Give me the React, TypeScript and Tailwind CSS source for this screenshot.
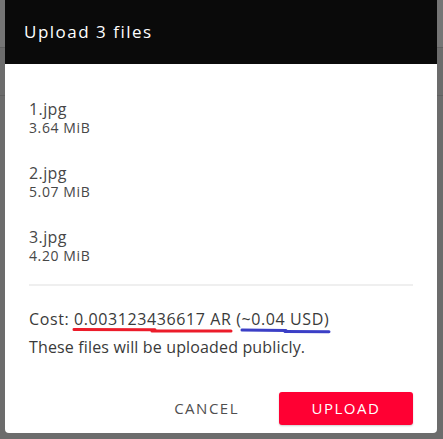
const files = [
  { name: '1.jpg', size: '3.64 MiB' },
  { name: '2.jpg', size: '5.07 MiB' },
  { name: '3.jpg', size: '4.20 MiB' },
]

// hand-drawn highlight strokes laid over the cost line
function CostMarks() {
  return (
    <svg className="absolute left-0 top-0 pointer-events-none overflow-visible" width={320} height={30}>
      <path d="M45 21.5 L126 21.8" stroke="#ec1c2a" strokeWidth={3} strokeLinecap="round" fill="none" />
      <path d="M123 23 L202 23" stroke="#ec1c2a" strokeWidth={3} strokeLinecap="round" fill="none" />
      <path d="M213 22 L257 22.4" stroke="#3b3fc6" strokeWidth={3} strokeLinecap="round" fill="none" />
      <path d="M256 23.6 L300 23.8" stroke="#3b3fc6" strokeWidth={3} strokeLinecap="round" fill="none" />
    </svg>
  )
}

export default function App() {
  return (
    <div className="w-[443px] h-[439px] bg-[linear-gradient(to_bottom,#757575_0,#757575_47px,#606060_47px,#606060_48px,#6c6c6c_48px,#6c6c6c_95px,#606060_95px,#606060_96px,#6c6c6c_96px)] pl-[5px] pr-[6px] pb-[6px] font-['Open_Sans',sans-serif]">
      <div className="h-[433px] bg-white rounded-b-[4px] flex flex-col overflow-hidden">
        <div className="h-[64px] shrink-0 bg-[#0a0a0a] flex items-center px-[19px]">
          <h1 className="text-white text-[17px] tracking-[1.5px]">Upload 3 files</h1>
        </div>

        <div className="px-[24px] pt-[35px] flex-1 flex flex-col">
          <div className="flex flex-col gap-[26px]">
            {files.map((f) => (
              <div key={f.name} className="text-[#474747]">
                <p className="text-[16px] leading-[20px] tracking-[0.4px]">{f.name}</p>
                <p className="text-[14px] leading-[18px] tracking-[0.6px]">{f.size}</p>
              </div>
            ))}
          </div>

          <div className="mt-[19px] h-[2px] bg-[#efefef]" />

          <div className="relative mt-[22px]">
            <p className="text-[16px] leading-[22px] tracking-[0.6px] text-[#3a3a3a]">
              Cost: 0.003123436617 AR (~0.04 USD)
            </p>
            <CostMarks />
          </div>
          <p className="mt-[6px] text-[16px] leading-[22px] tracking-[0.15px] text-[#3a3a3a]">
            These files will be uploaded publicly.
          </p>

          <div className="mt-auto mb-[8px] flex items-center justify-end gap-[40px]">
            <button className="h-[33px] text-[15px] tracking-[1.5px] text-[#4f4f4f]">CANCEL</button>
            <button className="w-[134px] h-[33px] rounded-[3px] bg-[#ff0033] text-white text-[15px] tracking-[1.5px] shadow-[0_1px_2px_rgba(0,0,0,0.2)]">
              UPLOAD
            </button>
          </div>
        </div>
      </div>
    </div>
  )
}
